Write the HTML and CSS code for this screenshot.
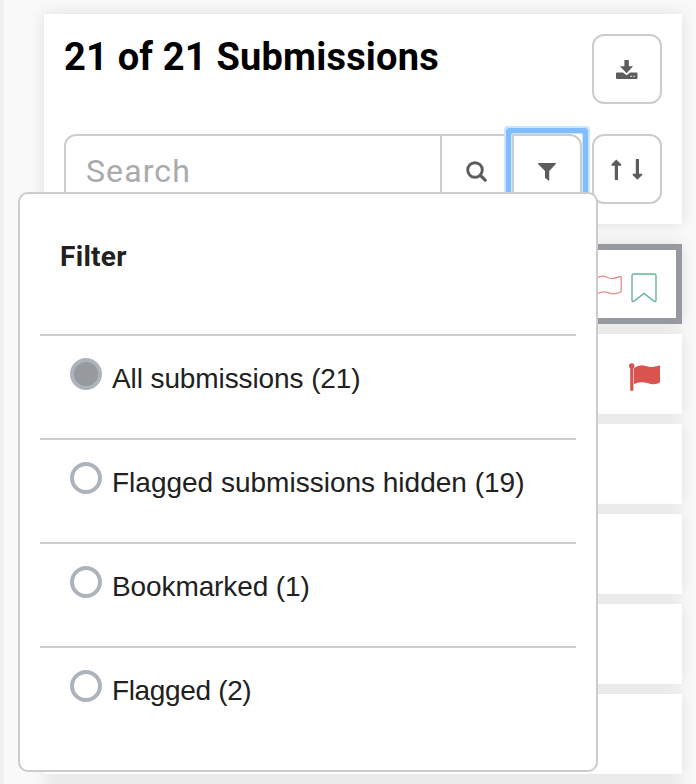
FILE: index.html
```html
<!DOCTYPE html>
<html lang="en">
<head>
<meta charset="utf-8">
<title>Submissions</title>
<link rel="stylesheet" href="styles.css">
</head>
<body>
<main class="sidebar">
  <section class="card header">
    <div class="title-row">
      <h1>21 of 21 Submissions</h1>
      <button class="btn" aria-label="Download">
        <svg width="22" height="20" viewBox="0 0 22 20"><path d="M8.400 0h4.400v6.200h4.300L10.600 13.200 4 6.200h4.400z"/><path fill-rule="evenodd" d="M1 12.600h6l3.600 2.600 3.600-2.600h6.300q1 0 1 1v4.500q0 1-1 1H1q-1 0-1-1v-4.500q0-1 1-1zM14.500 15.800v1.200h1.200v-1.200zM17.400 15.800v1.200h1.200v-1.200z"/></svg>
      </button>
    </div>
    <div class="tools">
      <div class="group">
        <input class="search" type="text" placeholder="Search">
        <button class="btn search-btn" aria-label="Search">
          <svg width="22" height="22" viewBox="0 0 22 22"><circle cx="9" cy="9" r="7.300" fill="none" stroke="#5c5c5c" stroke-width="2.900"/><path d="M14.200 14.200l5 5" stroke="#5c5c5c" stroke-width="3.200" stroke-linecap="round"/></svg>
        </button>
        <div class="filter-wrap">
          <button class="btn filter-btn" aria-label="Filter">
            <svg width="18" height="18" viewBox="0 0 18 18"><path d="M.6 0h16.800q.9.500.2 1.300L11.200 8v9.200q-.2.800-.9.400L7 14.700V8L.3 1.300Q-.3.500.6 0z"/></svg>
          </button>
          <div class="popover">
            <h2>Filter</h2>
            <ul>
              <li><span class="radio checked"></span><span>All submissions (21)</span></li>
              <li><span class="radio"></span><span class="wide">Flagged submissions hidden (19)</span></li>
              <li><span class="radio"></span><span>Bookmarked (1)</span></li>
              <li><span class="radio"></span><span class="narrow">Flagged (2)</span></li>
            </ul>
          </div>
        </div>
      </div>
      <button class="btn" aria-label="Sort">
        <svg class="sort" width="32" height="22" viewBox="0 0 32 22"><path d="M5.300.5L10.200 5.300v1.400H7V21H3.800V6.700H.5V5.300zM24.800 0H28v14.800h3.200v1.300l-4.800 4.600-4.800-4.600v-1.300h3.200z"/></svg>
      </button>
    </div>
  </section>
  <article class="card item selected">
    <svg class="outline-flag" width="26" height="32" viewBox="0 0 26 32"><path d="M1 6Q6 2.500 11 5.300T23.500 4.700q1.700-.8 1.700.6v13.500q0 .9-.9 1.400-6 3-11.500.6T1 22M1 4v26" fill="none" stroke="#e88c89" stroke-width="1.300"/></svg>
    <svg width="26" height="30" viewBox="0 0 26 30"><path d="M2.800 1h20.400q1.800 0 1.800 1.800v24.400q0 2-1.800 1.200L13 20.500 2.800 28.400Q1 29.200 1 27.200V2.800Q1 1 2.800 1z" fill="none" stroke="#66b592" stroke-width="1.400"/></svg>
  </article>
  <article class="card item">
    <svg class="flag" width="32" height="29" viewBox="0 0 32 29"><circle cx="2.700" cy="2.900" r="2.700"/><rect x="1.200" y="3" width="3.200" height="25" rx="1.500"/><path d="M5 5Q9 2 14 2.400c6 .5 8 3.300 15.600.2q1.400-.5 1.400.8v15q0 1-1 1.500-5.500 2.500-10 .7Q11 17.500 5 21.200z"/></svg>
  </article>
  <article class="card item"></article>
  <article class="card item"></article>
  <article class="card item"></article>
  <article class="card item"></article>
  <article class="card item"></article>
</main>
</body>
</html>
```
FILE: styles.css
```css
* { box-sizing: border-box; }
body {
  margin: 0;
  height: 784px;
  overflow: hidden;
  background: #f9f9f9;
  font-family: Roboto, sans-serif;
  color: #212121;
}
.sidebar {
  height: 784px;
  padding: 14px 14px 0 40px;
  border-left: 4px solid #f0f0f0;
  overflow: hidden;
}
.card { background: #fff; box-shadow: 0 0 14px rgba(0, 0, 0, .11); }
.header {
  position: relative;
  z-index: 2;
  height: 210px;
  margin-bottom: 20px;
  padding: 20px;
}
.title-row { display: flex; justify-content: space-between; height: 100px; }
h1 {
  margin: 0;
  font-size: 38px;
  line-height: 46px;
  letter-spacing: .2px;
  color: #000;
}
.tools { display: flex; justify-content: space-between; }
.btn {
  display: flex;
  align-items: center;
  justify-content: center;
  width: 70px;
  height: 70px;
  padding: 0;
  border: 2px solid #ccc;
  border-radius: 12px;
  background: #fff;
}
.btn svg { fill: #5c5c5c; margin-top: 2px; }
.btn .sort { margin-top: 1px; }
.group { display: flex; width: 518px; }
.search {
  width: 378px;
  height: 70px;
  padding: 4px 20px 0;
  border: 2px solid #ccc;
  border-radius: 12px 0 0 12px;
  font: 32px Roboto, sans-serif;
  letter-spacing: 1.1px;
  background: #fff;
}
.search::placeholder { color: #aaa; opacity: 1; }
.search-btn { width: 72px; margin-left: -2px; border-radius: 0; }
.search-btn svg { margin: 6px 0 0 2px; }
.filter-wrap { position: relative; }
.filter-wrap::before {
  content: "";
  position: absolute;
  inset: 0;
  border-radius: 1px;
  box-shadow: 0 0 0 1px #cce5ff, 0 0 0 6px #80bdff, 0 0 0 8px #cce5ff;
}
.filter-btn { position: relative; border-radius: 0 12px 12px 0; }
.filter-btn svg { margin-top: 6px; }
.popover {
  position: absolute;
  top: 58px;
  right: -16px;
  width: 580px;
  height: 580px;
  padding: 40px 20px 0;
  border: 2px solid #ccc;
  border-radius: 10px;
  background: #fff;
}
h2 { margin: 0; padding-left: 20px; height: 100px; font-size: 28px; line-height: 46px; letter-spacing: .3px; }
ul { margin: 0; padding: 0; list-style: none; }
li {
  display: flex;
  gap: 10px;
  height: 104px;
  padding: 22px 0 0 30px;
  border-top: 2px solid #ccc;
  font-family: "Liberation Sans", sans-serif;
  font-size: 28px;
  line-height: 42px;
  letter-spacing: -.1px;
}
.wide { letter-spacing: 0; }
.narrow { letter-spacing: -.35px; }
.radio { width: 32px; height: 32px; border: 4px solid #adb3ba; border-radius: 50%; }
.checked { background: #969a9f; }
.item {
  display: flex;
  align-items: center;
  justify-content: flex-end;
  height: 80px;
  margin-bottom: 10px;
  padding-right: 21px;
}
.selected { gap: 9px; padding-right: 19px; border: 6px solid #969a9f; }
.selected svg { margin-top: 8px; }
.flag { fill: #d9534f; margin-top: 7px; }
```
